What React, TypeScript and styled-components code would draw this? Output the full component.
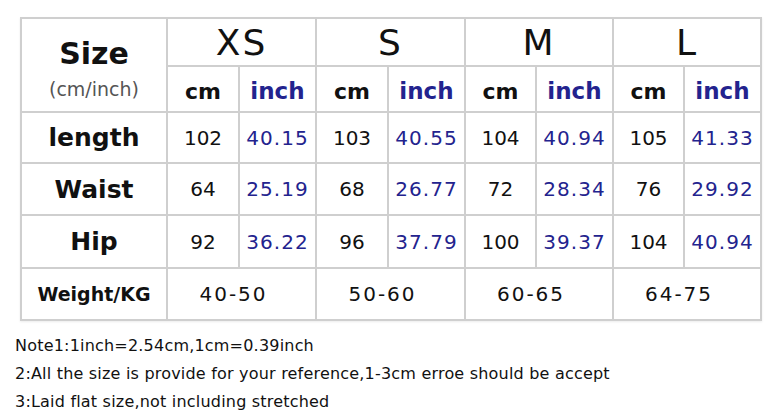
import React from 'react';
import styled, { createGlobalStyle } from 'styled-components';

const GlobalStyle = createGlobalStyle`
  body {
    margin: 0;
    background: #ffffff;
    font-family: "DejaVu Sans", "Liberation Sans", sans-serif;
    color: #111111;
  }
`;

const Page = styled.div`
  width: 783px;
  height: 416px;
  padding: 17px 0 0 20px;
  box-sizing: border-box;
  overflow: hidden;
`;

const Grid = styled.div`
  display: grid;
  grid-template-columns: 144px 70px 75px 70px 75px 69px 75px 69px 75px;
  grid-template-rows: 46px 44px 49px 50px 51px 50px;
  gap: 2px;
  padding: 2px;
  background: #cfcfcf;
  width: max-content;
  box-shadow: 0 1px 2px rgba(0, 0, 0, 0.08);
`;

const Cell = styled.div<{ $span?: number; $rows?: number; $shift?: number }>`
  background: #ffffff;
  display: flex;
  align-items: center;
  justify-content: center;
  grid-column: span ${(p) => p.$span || 1};
  grid-row: span ${(p) => p.$rows || 1};
  padding-right: ${(p) => p.$shift || 0}px;
`;

const SizeHead = styled(Cell)`
  flex-direction: column;
  gap: 7px;
  padding-top: 6px;
`;

const SizeTitle = styled.span`
  font-size: 30px;
  font-weight: bold;
  line-height: 34px;
`;

const Unit = styled.span`
  font-size: 19px;
  color: #555555;
  line-height: 22px;
`;

const SizeLabel = styled.span`
  font-size: 36px;
  line-height: 1;
  letter-spacing: 2px;
  padding-top: 2px;
`;

const UnitLabel = styled.span<{ $blue?: boolean }>`
  font-size: ${(p) => (p.$blue ? 23 : 22)}px;
  font-weight: bold;
  padding-top: 4px;
  color: ${(p) => (p.$blue ? '#23238e' : '#111111')};
`;

const RowLabel = styled.span<{ $small?: boolean }>`
  font-size: ${(p) => (p.$small ? 19 : 25)}px;
  font-weight: bold;
`;

const Value = styled.span<{ $blue?: boolean }>`
  font-size: 20px;
  letter-spacing: ${(p) => (p.$blue ? 1 : 0)}px;
  color: ${(p) => (p.$blue ? '#23238e' : '#111111')};
`;

const Range = styled.span`
  font-size: 20px;
  letter-spacing: 2px;
`;

const Notes = styled.div`
  margin: 11px 0 0 -5px;
  font-family: "DejaVu Sans", "Liberation Sans", sans-serif;
  font-size: 16px;
  letter-spacing: 0.2px;
  line-height: 28px;
  color: #111111;
`;

const sizes = ['XS', 'S', 'M', 'L'];

const rows: { label: string; values: [string, string][] }[] = [
  { label: 'length', values: [['102', '40.15'], ['103', '40.55'], ['104', '40.94'], ['105', '41.33']] },
  { label: 'Waist', values: [['64', '25.19'], ['68', '26.77'], ['72', '28.34'], ['76', '29.92']] },
  { label: 'Hip', values: [['92', '36.22'], ['96', '37.79'], ['100', '39.37'], ['104', '40.94']] },
];

const weights = ['40-50', '50-60', '60-65', '64-75'];

export default function App() {
  return (
    <Page>
      <GlobalStyle />
      <Grid>
        <SizeHead $rows={2}>
          <SizeTitle>Size</SizeTitle>
          <Unit>(cm/inch)</Unit>
        </SizeHead>
        {sizes.map((s) => (
          <Cell key={s} $span={2}>
            <SizeLabel>{s}</SizeLabel>
          </Cell>
        ))}
        {sizes.map((s) => (
          <React.Fragment key={s + '-units'}>
            <Cell>
              <UnitLabel>cm</UnitLabel>
            </Cell>
            <Cell>
              <UnitLabel $blue>inch</UnitLabel>
            </Cell>
          </React.Fragment>
        ))}
        {rows.map((row) => (
          <React.Fragment key={row.label}>
            <Cell>
              <RowLabel>{row.label}</RowLabel>
            </Cell>
            {row.values.map(([cm, inch], i) => (
              <React.Fragment key={i}>
                <Cell>
                  <Value>{cm}</Value>
                </Cell>
                <Cell>
                  <Value $blue>{inch}</Value>
                </Cell>
              </React.Fragment>
            ))}
          </React.Fragment>
        ))}
        <Cell>
          <RowLabel $small>Weight/KG</RowLabel>
        </Cell>
        {weights.map((w) => (
          <Cell key={w} $span={2} $shift={16}>
            <Range>{w}</Range>
          </Cell>
        ))}
      </Grid>
      <Notes>
        <div>Note1:1inch=2.54cm,1cm=0.39inch</div>
        <div>2:All the size is provide for your reference,1-3cm erroe should be accept</div>
        <div>3:Laid flat size,not including stretched</div>
      </Notes>
    </Page>
  );
}
